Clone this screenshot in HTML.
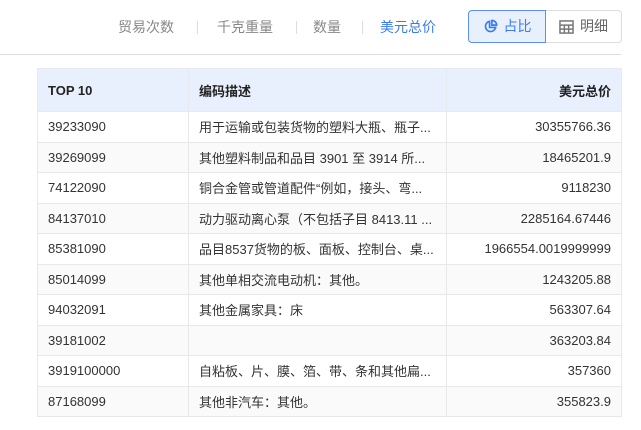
<!DOCTYPE html>
<html><head><meta charset="utf-8"><style>
body{margin:0;width:641px;height:430px;background:#fff;font-family:"Liberation Sans","Noto Sans CJK SC",sans-serif;position:relative;overflow:hidden}
.tab{position:absolute;top:17px;font-size:14px;color:#888;line-height:20px}
.sep{position:absolute;top:21px;width:1px;height:13px;background:#ddd}
.btn{position:absolute;top:10px;height:33px;box-sizing:border-box;border:1px solid #ddd;font-size:14px;line-height:31px;color:#666;display:flex;align-items:center;justify-content:center;gap:6px}
.line{position:absolute;left:0;top:54px;width:621px;height:1px;background:#ddd}
table{position:absolute;left:37px;top:68px;width:585px;border-collapse:collapse;font-size:13px;color:#333}
td,th{border:1px solid #e8e8e8;height:30.5px;padding:0 10px;box-sizing:border-box;white-space:nowrap}
th{background:#e9f0fd;height:43px;font-weight:bold;text-align:left;color:#222;border-color:#e6e9ef}
th+th{border-left-color:#bfc4cf}
tr:nth-child(odd) td{background:#fafafa}
.r{text-align:right}
</style></head><body>
<div class="tab" style="left:118px">贸易次数</div><div class="sep" style="left:197px"></div>
<div class="tab" style="left:217px">千克重量</div><div class="sep" style="left:296px"></div>
<div class="tab" style="left:313px">数量</div><div class="sep" style="left:362px"></div>
<div class="tab" style="left:380px;color:#3a7cf0">美元总价</div>
<div class="btn" style="left:468px;width:78px;border-color:#5b8ff0;background:#e9f0fd;color:#3a7cf0;border-radius:4px 0 0 4px;z-index:1">
<svg width="15" height="15" viewBox="0 0 16 16" fill="none" stroke="#3a7cf0" stroke-width="1.8"><path d="M7 2.5a5.5 5.5 0 1 0 6.5 6.5H7z"/><path d="M9.5 1.5v5h5a5 5 0 0 0-5-5z"/></svg>占比</div>
<div class="btn" style="left:545px;width:77px;border-radius:0 4px 4px 0">
<svg width="15" height="14" viewBox="0 0 16 15" fill="none" stroke="#777" stroke-width="1.6"><rect x="1" y="1" width="14" height="13"/><path d="M1 5.5h14M1 9.8h14M5.7 5.5v8.5M10.3 5.5v8.5"/></svg>明细</div>
<div class="line"></div>
<table>
<tr><th style="width:151px">TOP 10</th><th style="width:258px">编码描述</th><th class="r">美元总价</th></tr>
<tr><td>39233090</td><td>用于运输或包装货物的塑料大瓶、瓶子...</td><td class="r">30355766.36</td></tr>
<tr><td>39269099</td><td>其他塑料制品和品目 3901 至 3914 所...</td><td class="r">18465201.9</td></tr>
<tr><td>74122090</td><td>铜合金管或管道配件“例如，接头、弯...</td><td class="r">9118230</td></tr>
<tr><td>84137010</td><td>动力驱动离心泵（不包括子目 8413.11 ...</td><td class="r">2285164.67446</td></tr>
<tr><td>85381090</td><td>品目8537货物的板、面板、控制台、桌...</td><td class="r">1966554.0019999999</td></tr>
<tr><td>85014099</td><td>其他单相交流电动机：其他。</td><td class="r">1243205.88</td></tr>
<tr><td>94032091</td><td>其他金属家具：床</td><td class="r">563307.64</td></tr>
<tr><td>39181002</td><td></td><td class="r">363203.84</td></tr>
<tr><td>3919100000</td><td>自粘板、片、膜、箔、带、条和其他扁...</td><td class="r">357360</td></tr>
<tr><td>87168099</td><td>其他非汽车：其他。</td><td class="r">355823.9</td></tr>
</table>
</body></html>
